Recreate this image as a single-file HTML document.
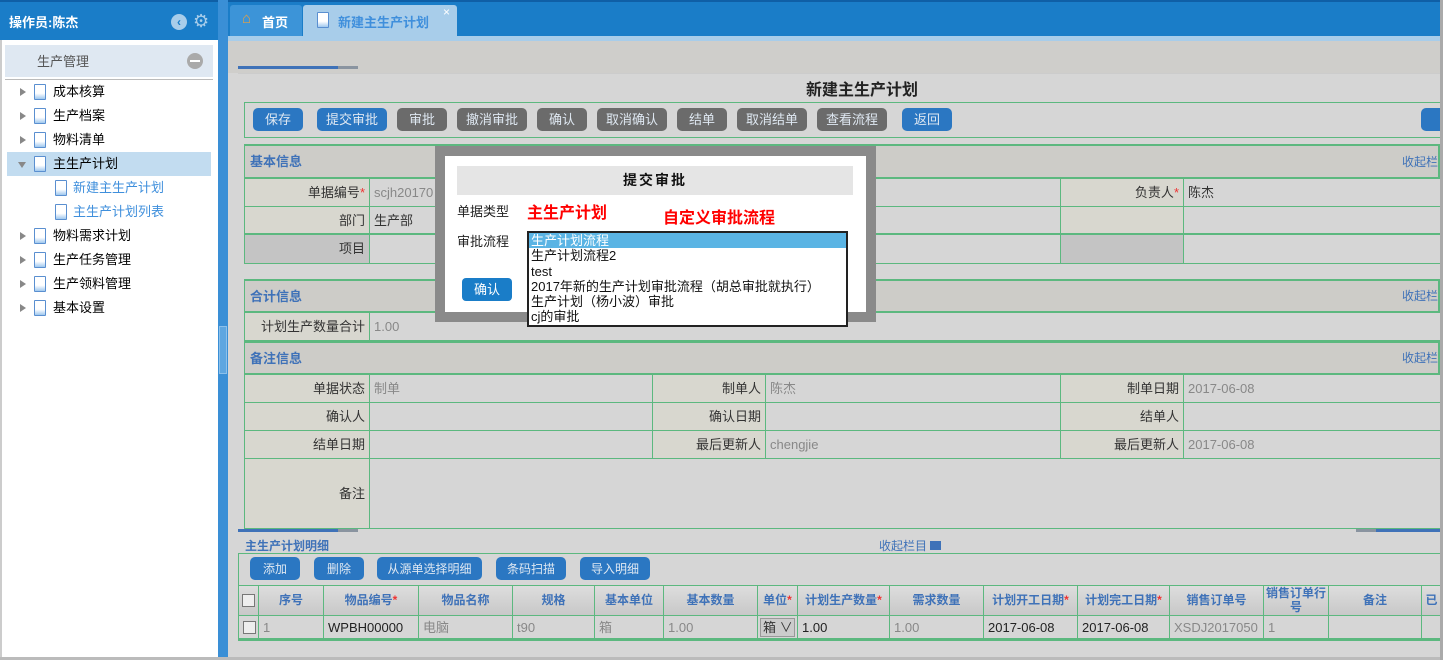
<!DOCTYPE html><html><head><meta charset="utf-8"><style>
*{margin:0;padding:0;box-sizing:border-box}
body{width:1449px;height:667px;background:#fff;position:relative;overflow:hidden;font-family:"Liberation Sans","Noto Sans CJK SC",sans-serif;font-size:13px;color:#333}
.a{position:absolute}
.btn{position:absolute;top:108px;height:23px;border-radius:5px;color:#dfe8f2;text-align:center;line-height:24px;font-size:13px}
.b{background:#2b77c2}.g{background:#6b6b6b}
.sec{position:absolute;left:244px;right:9px;border:2px solid #5cb87f;border-left-width:1px;background:#cdccc8;color:#3f72b8;font-weight:bold;font-size:13px;padding-left:5px}
.row{position:absolute;left:244px;width:1196px;border-bottom:1px solid #5cb87f;border-left:1px solid #5cb87f}
.c{position:absolute;top:0;bottom:0;border-right:1px solid #5cb87f;font-size:13px;padding:0 4px}
.l{background:#d8d7cf;text-align:right;color:#333}
.v{color:#888}
.tree div{position:absolute;left:0;width:211px;height:24px;line-height:24px;font-size:13px;color:#000}
.tri{position:absolute;left:13px;top:8px;width:0;height:0;border-left:6px solid #888;border-top:4px solid transparent;border-bottom:4px solid transparent}
.doc{position:absolute;top:4px;width:12px;height:16px;border:1px solid #5a8fd0;background:linear-gradient(#fff 60%,#9fc8ee);border-radius:1px}
.th{position:absolute;top:0;bottom:0;border-right:1px solid #5cb87f;text-align:center;color:#3f72b8;font-weight:bold;font-size:12px}
.td{position:absolute;top:0;bottom:0;border-right:1px solid #5cb87f;padding-left:4px;font-size:13px;line-height:24px}
.star{color:#e33}
</style></head><body>
<!-- sidebar -->
<div class="a" style="left:0;top:0;width:218px;height:40px;background:#1a7dc8;border-top:2px solid #0f5fa6"></div>
<div class="a" style="left:9px;top:12px;color:#fff;font-weight:bold;font-size:13px">操作员:陈杰</div>
<div class="a" style="left:171px;top:14px;width:16px;height:16px;border-radius:50%;background:#a8cdea;color:#1a7dc8;font-size:12px;line-height:16px;text-align:center;font-weight:bold">‹</div>
<div class="a" style="left:193px;top:12px;color:#a8cdea;font-size:18px;line-height:18px">⚙</div>
<div class="a" style="left:5px;top:45px;width:208px;height:32px;background:#dfe8f2"></div>
<div class="a" style="left:37px;top:51px;color:#555;font-size:13px">生产管理</div>
<div class="a" style="left:187px;top:53px;width:16px;height:16px;border-radius:50%;background:#aaa"><div class="a" style="left:3px;top:7px;width:10px;height:2px;background:#fff"></div></div>
<div class="a" style="left:5px;top:79px;width:208px;height:1px;background:#bbb"></div>
<div class="tree">
<div style="top:80px;left:7px"><span class="tri"></span><span class="doc" style="left:27px"></span><span style="position:absolute;left:46px">成本核算</span></div>
<div style="top:104px;left:7px"><span class="tri"></span><span class="doc" style="left:27px"></span><span style="position:absolute;left:46px">生产档案</span></div>
<div style="top:128px;left:7px"><span class="tri"></span><span class="doc" style="left:27px"></span><span style="position:absolute;left:46px">物料清单</span></div>
<div style="top:152px;left:7px;width:204px;background:#c2dcf0"><span class="tri" style="left:11px;top:10px;border-top:6px solid #888;border-left:4px solid transparent;border-right:4px solid transparent;border-bottom:0"></span><span class="doc" style="left:27px"></span><span style="position:absolute;left:46px">主生产计划</span></div>
<div style="top:176px;left:7px"><span class="doc" style="left:48px"></span><span style="position:absolute;left:66px;color:#3f8fdc">新建主生产计划</span></div>
<div style="top:200px;left:7px"><span class="doc" style="left:48px"></span><span style="position:absolute;left:66px;color:#3f8fdc">主生产计划列表</span></div>
<div style="top:224px;left:7px"><span class="tri"></span><span class="doc" style="left:27px"></span><span style="position:absolute;left:46px">物料需求计划</span></div>
<div style="top:248px;left:7px"><span class="tri"></span><span class="doc" style="left:27px"></span><span style="position:absolute;left:46px">生产任务管理</span></div>
<div style="top:272px;left:7px"><span class="tri"></span><span class="doc" style="left:27px"></span><span style="position:absolute;left:46px">生产领料管理</span></div>
<div style="top:296px;left:7px"><span class="tri"></span><span class="doc" style="left:27px"></span><span style="position:absolute;left:46px">基本设置</span></div>
</div>
<div class="a" style="left:0;top:40px;width:2px;height:617px;background:#ccc"></div>
<div class="a" style="left:0;top:657px;width:1440px;height:3px;background:#bbb"></div>
<!-- splitter -->
<div class="a" style="left:218px;top:0;width:10px;height:657px;background:#3a8fd6"></div>
<div class="a" style="left:219px;top:326px;width:8px;height:48px;background:#5ea6e0;border:1px solid #8cc0ea"></div>
<!-- main -->
<div class="a" style="left:228px;top:0;width:1212px;height:657px;background:#d6d6d6"></div>
<div class="a" style="left:228px;top:0;width:1212px;height:36px;background:#1a7dc8;border-top:2px solid #0f5fa6"></div>
<div class="a" style="left:228px;top:36px;width:1212px;height:5px;background:#a8cdea"></div>
<div class="a" style="left:228px;top:41px;width:1212px;height:32px;background:#cfcecb"></div>
<div class="a" style="left:230px;top:5px;width:72px;height:31px;background:#3c94d8;border-radius:3px 3px 0 0"></div>
<div class="a" style="left:242px;top:10px;color:#e8a040;font-size:15px">⌂</div>
<div class="a" style="left:262px;top:12px;color:#fff;font-weight:bold;font-size:13px">首页</div>
<div class="a" style="left:303px;top:5px;width:154px;height:31px;background:#a8cdea;border-radius:3px 3px 0 0"></div>
<div class="doc a" style="left:317px;top:12px"></div>
<div class="a" style="left:338px;top:12px;color:#3f8fdc;font-weight:bold;font-size:13px">新建主生产计划</div>
<div class="a" style="left:443px;top:5px;color:#fff;font-size:12px">×</div>
<div class="a" style="left:238px;top:66px;width:100px;height:3px;background:#3f72b8"></div>
<div class="a" style="left:338px;top:66px;width:20px;height:3px;background:#8a94a0"></div>
<div class="a" style="left:238px;top:73px;width:1202px;height:1px;background:#ccc"></div>
<div class="a" style="left:238px;top:76px;width:1248px;text-align:center;font-weight:bold;font-size:16px;color:#222">新建主生产计划</div>
<div class="a" style="left:244px;top:102px;width:1196px;height:36px;border:1px solid #5cb87f;border-right:0"></div>
<div class="btn b" style="left:253px;width:50px">保存</div>
<div class="btn b" style="left:317px;width:70px">提交审批</div>
<div class="btn g" style="left:397px;width:50px">审批</div>
<div class="btn g" style="left:457px;width:70px">撤消审批</div>
<div class="btn g" style="left:537px;width:50px">确认</div>
<div class="btn g" style="left:597px;width:70px">取消确认</div>
<div class="btn g" style="left:677px;width:50px">结单</div>
<div class="btn g" style="left:737px;width:70px">取消结单</div>
<div class="btn g" style="left:817px;width:70px">查看流程</div>
<div class="btn b" style="left:902px;width:50px">返回</div>
<div class="btn b" style="left:1421px;width:19px;border-radius:5px 0 0 5px"></div>
<!-- 基本信息 -->
<div class="sec" style="top:144px;height:35px;line-height:32px">基本信息<span style="position:absolute;right:0;font-weight:normal;font-size:12px">收起栏</span></div>
<div class="row" style="top:179px;height:28px;line-height:27px"><div class="c l" style="left:0;width:125px">单据编号<span class="star">*</span></div><div class="c v" style="left:125px;width:691px">scjh20170</div><div class="c l" style="left:816px;width:123px">负责人<span class="star">*</span></div><div class="c" style="left:939px;width:257px;color:#333">陈杰</div></div>
<div class="row" style="top:207px;height:28px;line-height:27px;border-bottom:2px solid #5cb87f"><div class="c l" style="left:0;width:125px">部门</div><div class="c" style="left:125px;width:691px;color:#333">生产部</div><div class="c l" style="left:816px;width:123px"></div><div class="c" style="left:939px;width:257px"></div></div>
<div class="row" style="top:235px;height:29px;line-height:28px"><div class="c l" style="left:0;width:125px;background:#c4c4c4">项目</div><div class="c" style="left:125px;width:691px"></div><div class="c" style="left:816px;width:123px;background:#c4c4c4"></div><div class="c" style="left:939px;width:257px"></div></div>
<!-- 合计 -->
<div class="sec" style="top:279px;height:34px;line-height:31px">合计信息<span style="position:absolute;right:0;font-weight:normal;font-size:12px">收起栏</span></div>
<div class="row" style="top:313px;height:28px;line-height:27px"><div class="c l" style="left:0;width:125px">计划生产数量合计</div><div class="c v" style="left:125px;width:1071px">1.00</div></div>
<div class="sec" style="top:341px;height:34px;line-height:31px">备注信息<span style="position:absolute;right:0;font-weight:normal;font-size:12px">收起栏</span></div>
<div class="row" style="top:375px;height:28px;line-height:27px"><div class="c l" style="left:0;width:125px">单据状态</div><div class="c v" style="left:125px;width:283px">制单</div><div class="c l" style="left:408px;width:113px">制单人</div><div class="c v" style="left:521px;width:295px">陈杰</div><div class="c l" style="left:816px;width:123px">制单日期</div><div class="c v" style="left:939px;width:257px">2017-06-08</div></div>
<div class="row" style="top:403px;height:28px;line-height:27px"><div class="c l" style="left:0;width:125px">确认人</div><div class="c" style="left:125px;width:283px"></div><div class="c l" style="left:408px;width:113px">确认日期</div><div class="c" style="left:521px;width:295px"></div><div class="c l" style="left:816px;width:123px">结单人</div><div class="c" style="left:939px;width:257px"></div></div>
<div class="row" style="top:431px;height:28px;line-height:27px"><div class="c l" style="left:0;width:125px">结单日期</div><div class="c" style="left:125px;width:283px"></div><div class="c l" style="left:408px;width:113px">最后更新人</div><div class="c v" style="left:521px;width:295px">chengjie</div><div class="c l" style="left:816px;width:123px">最后更新人</div><div class="c v" style="left:939px;width:257px">2017-06-08</div></div>
<div class="row" style="top:459px;height:70px;line-height:70px"><div class="c l" style="left:0;width:125px">备注</div><div class="c" style="left:125px;width:1071px"></div></div>
<!-- detail -->
<div class="a" style="left:238px;top:529px;width:100px;height:3px;background:#3f72b8"></div>
<div class="a" style="left:338px;top:529px;width:20px;height:3px;background:#8a94a0"></div>
<div class="a" style="left:1356px;top:529px;width:20px;height:3px;background:#8a94a0"></div>
<div class="a" style="left:1376px;top:529px;width:64px;height:3px;background:#3f72b8"></div>
<div class="a" style="left:245px;top:537px;color:#3f72b8;font-weight:bold;font-size:12px">主生产计划明细</div>
<div class="a" style="left:879px;top:537px;color:#3f72b8;font-size:12px">收起栏目 <span style="display:inline-block;width:11px;height:9px;background:#3f72b8"></span></div>
<div class="a" style="left:238px;top:553px;width:1202px;height:1px;background:#5cb87f"></div>
<div class="a" style="left:238px;top:554px;width:1px;height:31px;background:#5cb87f"></div>
<div class="btn b" style="left:250px;top:557px;width:50px;font-size:12px">添加</div>
<div class="btn b" style="left:314px;top:557px;width:50px;font-size:12px">删除</div>
<div class="btn b" style="left:377px;top:557px;width:105px;font-size:12px">从源单选择明细</div>
<div class="btn b" style="left:496px;top:557px;width:70px;font-size:12px">条码扫描</div>
<div class="btn b" style="left:580px;top:557px;width:70px;font-size:12px">导入明细</div>
<div class="a" style="left:238px;top:585px;width:1202px;height:31px;border:1px solid #5cb87f;border-right:0;background:linear-gradient(#ddd,#c8c8c8)">
<div class="th" style="left:0;width:20px"><span style="display:inline-block;margin-top:8px;width:13px;height:13px;border:1px solid #777;background:#eee"></span></div>
<div class="th" style="left:20px;width:65px;line-height:29px">序号</div>
<div class="th" style="left:85px;width:95px;line-height:29px">物品编号<span class="star">*</span></div>
<div class="th" style="left:180px;width:94px;line-height:29px">物品名称</div>
<div class="th" style="left:274px;width:82px;line-height:29px">规格</div>
<div class="th" style="left:356px;width:69px;line-height:29px">基本单位</div>
<div class="th" style="left:425px;width:94px;line-height:29px">基本数量</div>
<div class="th" style="left:519px;width:40px;line-height:29px">单位<span class="star">*</span></div>
<div class="th" style="left:559px;width:92px;line-height:29px">计划生产数量<span class="star">*</span></div>
<div class="th" style="left:651px;width:94px;line-height:29px">需求数量</div>
<div class="th" style="left:745px;width:94px;line-height:29px">计划开工日期<span class="star">*</span></div>
<div class="th" style="left:839px;width:92px;line-height:29px">计划完工日期<span class="star">*</span></div>
<div class="th" style="left:931px;width:94px;line-height:29px">销售订单号</div>
<div class="th" style="left:1025px;width:65px;line-height:14px">销售订单行号</div>
<div class="th" style="left:1090px;width:93px;line-height:29px">备注</div>
<div class="th" style="left:1183px;width:19px;line-height:29px;border:0">已</div>
</div>
<div class="a" style="left:238px;top:616px;width:1202px;height:25px;border-left:1px solid #5cb87f;border-bottom:3px solid #5cb87f;background:#d6d6d6">
<div class="td" style="left:0;width:20px;padding-left:4px"><span style="display:inline-block;margin-top:5px;width:13px;height:13px;border:1px solid #777;background:#eee;vertical-align:top"></span></div>
<div class="td" style="left:20px;width:65px;color:#888">1</div>
<div class="td" style="left:85px;width:95px;color:#222">WPBH00000</div>
<div class="td" style="left:180px;width:94px;color:#888">电脑</div>
<div class="td" style="left:274px;width:82px;color:#888">t90</div>
<div class="td" style="left:356px;width:69px;color:#888">箱</div>
<div class="td" style="left:425px;width:94px;color:#888">1.00</div>
<div class="td" style="left:519px;width:40px;padding:2px"><div style="border:1px solid #999;background:#ccc;height:19px;line-height:18px;padding-left:2px">箱 ∨</div></div>
<div class="td" style="left:559px;width:92px;color:#222">1.00</div>
<div class="td" style="left:651px;width:94px;color:#888">1.00</div>
<div class="td" style="left:745px;width:94px;color:#222">2017-06-08</div>
<div class="td" style="left:839px;width:92px;color:#222">2017-06-08</div>
<div class="td" style="left:931px;width:94px;color:#888;overflow:hidden;white-space:nowrap">XSDJ2017050</div>
<div class="td" style="left:1025px;width:65px;color:#888">1</div>
<div class="td" style="left:1090px;width:93px"></div>
</div>
<!-- right edge shadow -->
<div class="a" style="left:1440px;top:0;width:3px;height:660px;background:#aaa"></div>
<!-- modal -->
<div class="a" style="left:435px;top:146px;width:441px;height:176px;background:#8a8a8a"></div>
<div class="a" style="left:445px;top:156px;width:421px;height:156px;background:#fff"></div>
<div class="a" style="left:457px;top:166px;width:396px;height:29px;background:#e5e5e5;text-align:center;line-height:29px;font-weight:bold;font-size:14px;color:#111;letter-spacing:2px">提交审批</div>
<div class="a" style="left:457px;top:201px;font-size:13px;color:#222">单据类型</div>
<div class="a" style="left:527px;top:199px;font-size:16px;color:#f00;font-weight:bold">主生产计划</div>
<div class="a" style="left:663px;top:204px;font-size:16px;color:#f00;font-weight:bold">自定义审批流程</div>
<div class="a" style="left:457px;top:231px;font-size:13px;color:#222">审批流程</div>
<div class="a" style="left:462px;top:278px;width:50px;height:23px;background:#1a7dc8;border-radius:4px;color:#fff;text-align:center;line-height:23px;font-size:13px">确认</div>
<div class="a" style="left:527px;top:231px;width:321px;height:96px;border:2px solid #222;background:#fff;font-size:13px;line-height:15.3px;color:#111">
<div style="background:#5ab4e4;color:#fff;padding-left:2px">生产计划流程</div>
<div style="padding-left:2px">生产计划流程2</div>
<div style="padding-left:2px">test</div>
<div style="padding-left:2px">2017年新的生产计划审批流程（胡总审批就执行）</div>
<div style="padding-left:2px">生产计划（杨小波）审批</div>
<div style="padding-left:2px">cj的审批</div>
</div>
</body></html>
